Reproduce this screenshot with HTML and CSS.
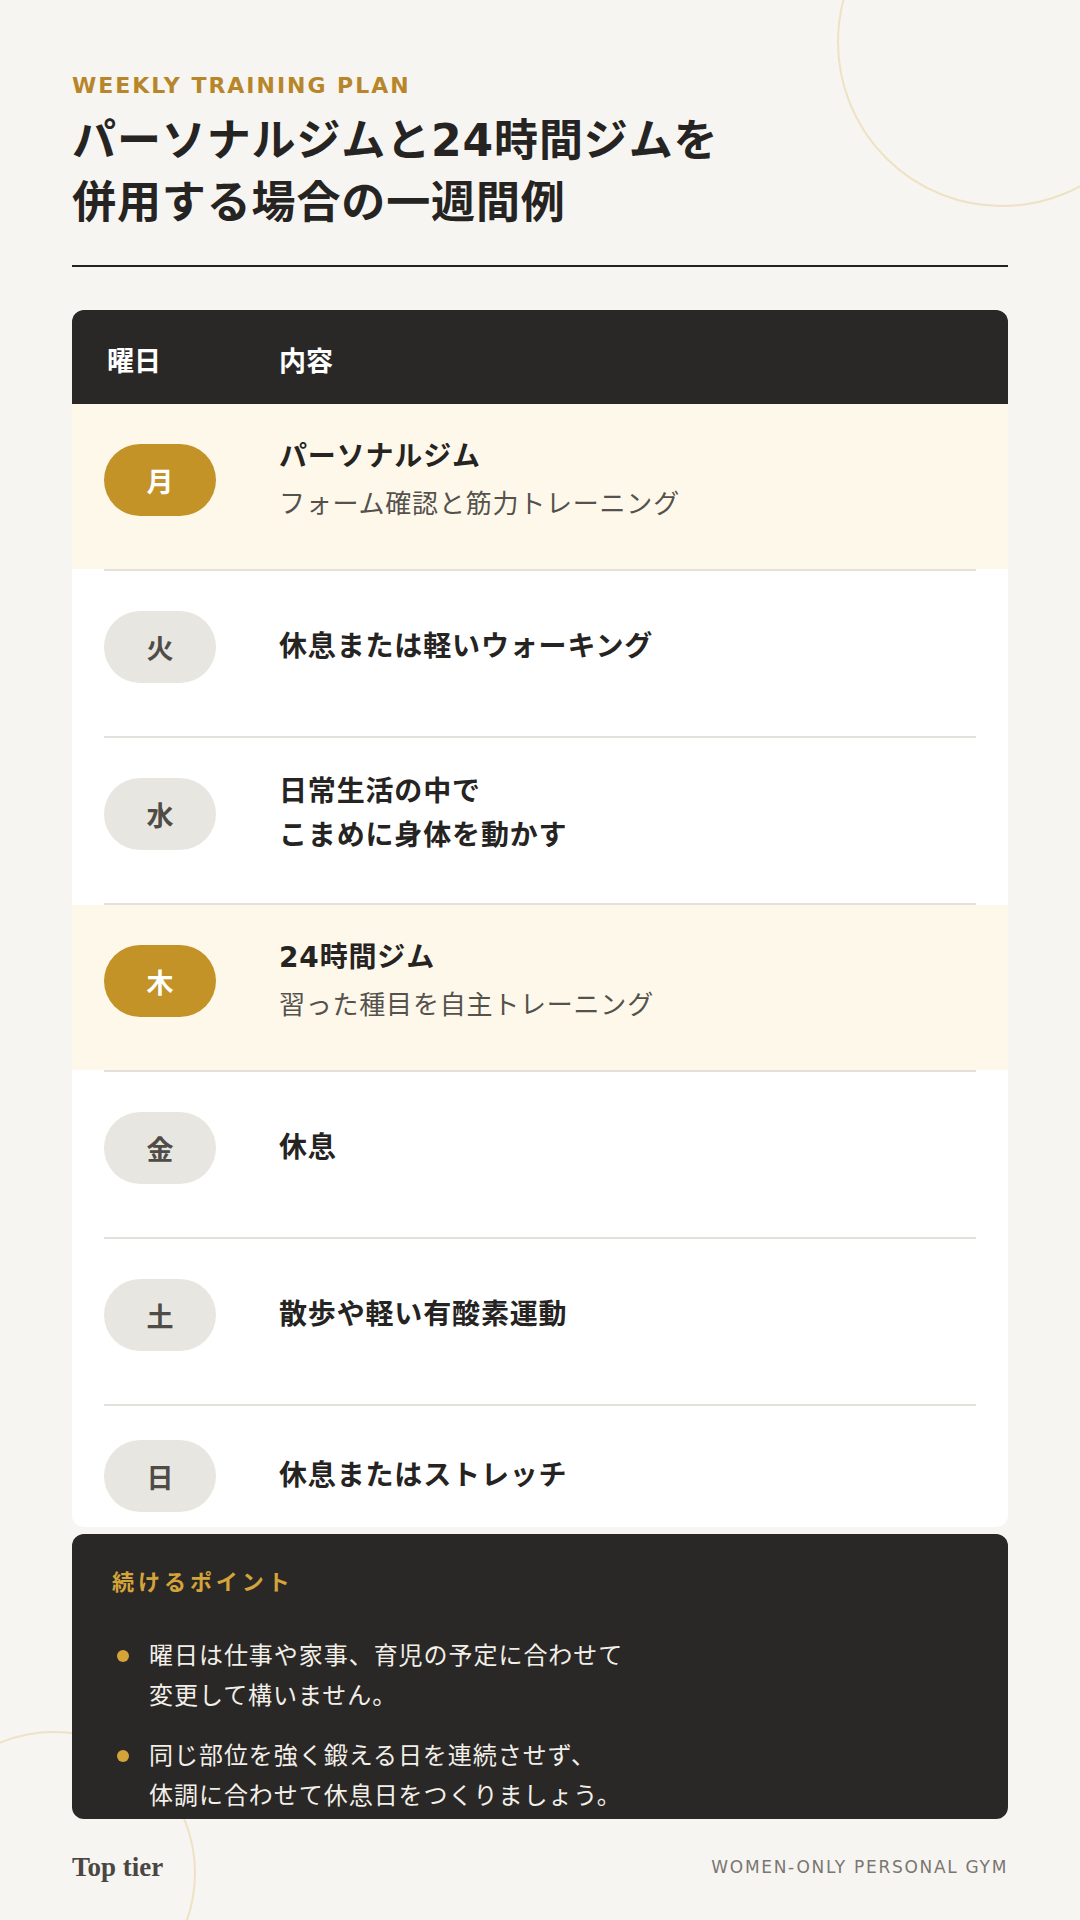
FILE: index.html
```html
<!DOCTYPE html>
<html lang="ja">
<head>
    <meta charset="UTF-8">
    <title>一週間のトレーニング例</title>
    <link rel="stylesheet" href="styles.css">
</head>
<body>
    <div class="backdrop">
        <div class="ring ring-top"></div>
        <div class="ring ring-bottom"></div>
    </div>

    <main class="page">
        <p class="eyebrow">WEEKLY TRAINING PLAN</p>
        <h1 class="title">パーソナルジムと24時間ジムを<br>併用する場合の一週間例</h1>
        <div class="rule"></div>

        <section class="plan">
            <div class="plan-head">
                <span>曜日</span>
                <span>内容</span>
            </div>

            <div class="row is-gym">
                <span class="day">月</span>
                <div class="task">
                    <p class="task-title">パーソナルジム</p>
                    <p class="task-note">フォーム確認と筋力トレーニング</p>
                </div>
            </div>
            <div class="row">
                <span class="day">火</span>
                <div class="task">
                    <p class="task-title">休息または軽いウォーキング</p>
                </div>
            </div>
            <div class="row">
                <span class="day">水</span>
                <div class="task">
                    <p class="task-title">日常生活の中で<br>こまめに身体を動かす</p>
                </div>
            </div>
            <div class="row is-gym">
                <span class="day">木</span>
                <div class="task">
                    <p class="task-title">24時間ジム</p>
                    <p class="task-note">習った種目を自主トレーニング</p>
                </div>
            </div>
            <div class="row">
                <span class="day">金</span>
                <div class="task">
                    <p class="task-title">休息</p>
                </div>
            </div>
            <div class="row">
                <span class="day">土</span>
                <div class="task">
                    <p class="task-title">散歩や軽い有酸素運動</p>
                </div>
            </div>
            <div class="row">
                <span class="day">日</span>
                <div class="task">
                    <p class="task-title">休息またはストレッチ</p>
                </div>
            </div>
        </section>

        <section class="tips">
            <h2 class="tips-title">続けるポイント</h2>
            <ul class="tips-list">
                <li>曜日は仕事や家事、育児の予定に合わせて<br>変更して構いません。</li>
                <li>同じ部位を強く鍛える日を連続させず、<br>体調に合わせて休息日をつくりましょう。</li>
            </ul>
        </section>

        <footer class="foot">
            <span class="brand">Top tier</span>
            <span class="tagline">WOMEN-ONLY PERSONAL GYM</span>
        </footer>
    </main>
</body>
</html>
```

FILE: styles.css
```css
body {
    margin: 0;
    width: 1080px;
    height: 1920px;
    overflow: hidden;
    position: relative;
    background: #f7f5f1;
    color: #262422;
    font-family: "DejaVu Sans", "Noto Sans CJK JP", sans-serif;
}

/* decorative rings */
.backdrop {
    position: absolute;
    inset: 0;
    overflow: hidden;
}

.ring {
    position: absolute;
    border: 2px solid #eee2c4;
    border-radius: 50%;
}

.ring-top {
    width: 326px;
    height: 326px;
    left: 837px;
    top: -123px;
}

.ring-bottom {
    width: 280px;
    height: 280px;
    left: -88px;
    top: 1731px;
}

.page {
    position: relative;
    z-index: 1;
    padding: 70px 72px 0;
}

.eyebrow {
    margin: 0 0 9px;
    font-size: 22px;
    line-height: 31px;
    font-weight: 700;
    letter-spacing: 0.09em;
    color: #b8862a;
}

.title {
    margin: 0;
    font-size: 44px;
    line-height: 62px;
    font-weight: 700;
    letter-spacing: 0.02em;
}

.rule {
    height: 2px;
    margin-top: 31px;
    background: #262422;
}

/* weekly table */
.plan {
    margin-top: 43px;
    height: 1217px;
    background: #fff;
    border-radius: 12px;
    overflow: hidden;
}

.plan-head {
    display: grid;
    grid-template-columns: 172px 1fr;
    align-items: center;
    height: 94px;
    box-sizing: border-box;
    padding: 10px 35px 0;
    background: #2a2826;
    color: #fff;
    font-size: 27px;
    line-height: 40px;
    font-weight: 700;
}

.row {
    position: relative;
    display: grid;
    grid-template-columns: 175px 1fr;
    align-items: center;
    height: 165px;
    box-sizing: border-box;
    padding: 0 32px 13px;
}

.row + .row {
    margin-top: 2px;
}

.row + .row::before {
    content: "";
    position: absolute;
    left: 32px;
    right: 32px;
    top: -2px;
    height: 2px;
    background: #e4e1dc;
}

.row:last-child {
    padding-bottom: 25px;
}

.is-gym {
    background: #fef8eb;
}

.day {
    display: flex;
    align-items: center;
    justify-content: center;
    width: 112px;
    height: 72px;
    border-radius: 36px;
    background: #e8e6e1;
    color: #4f4c47;
    font-size: 27px;
    font-weight: 700;
}

.is-gym .day {
    background: #c49328;
    color: #fff;
}

.task-title {
    margin: 0;
    font-size: 28px;
    line-height: 44px;
    font-weight: 700;
    letter-spacing: 0.03em;
}

.task-note {
    margin: 4px 0 0;
    font-size: 26px;
    line-height: 42px;
    letter-spacing: 0.03em;
    color: #55524d;
}

/* tips box */
.tips {
    margin-top: 7px;
    height: 285px;
    box-sizing: border-box;
    overflow: hidden;
    padding: 32px 40px 0;
    background: #2a2826;
    border-radius: 12px;
}

.tips-title {
    margin: 0 0 37px;
    font-size: 22px;
    line-height: 33px;
    font-weight: 700;
    letter-spacing: 0.18em;
    color: #d4a43a;
}

.tips-list {
    list-style: none;
    margin: 0;
    padding: 0;
    display: flex;
    flex-direction: column;
    gap: 20px;
}

.tips-list li {
    position: relative;
    padding-left: 37px;
    font-size: 24px;
    line-height: 40px;
    letter-spacing: 0.04em;
    color: #f2efe9;
}

.tips-list li::before {
    content: "";
    position: absolute;
    left: 5px;
    top: 14px;
    width: 12px;
    height: 12px;
    border-radius: 50%;
    background: #d4a43a;
}

.foot {
    display: flex;
    justify-content: space-between;
    align-items: center;
    height: 36px;
    margin-top: 30px;
}

.brand {
    font-family: "Liberation Serif", serif;
    font-size: 27px;
    font-weight: 600;
    color: #4a4743;
}

.tagline {
    font-size: 17px;
    letter-spacing: 0.1em;
    color: #7a7671;
}
```
